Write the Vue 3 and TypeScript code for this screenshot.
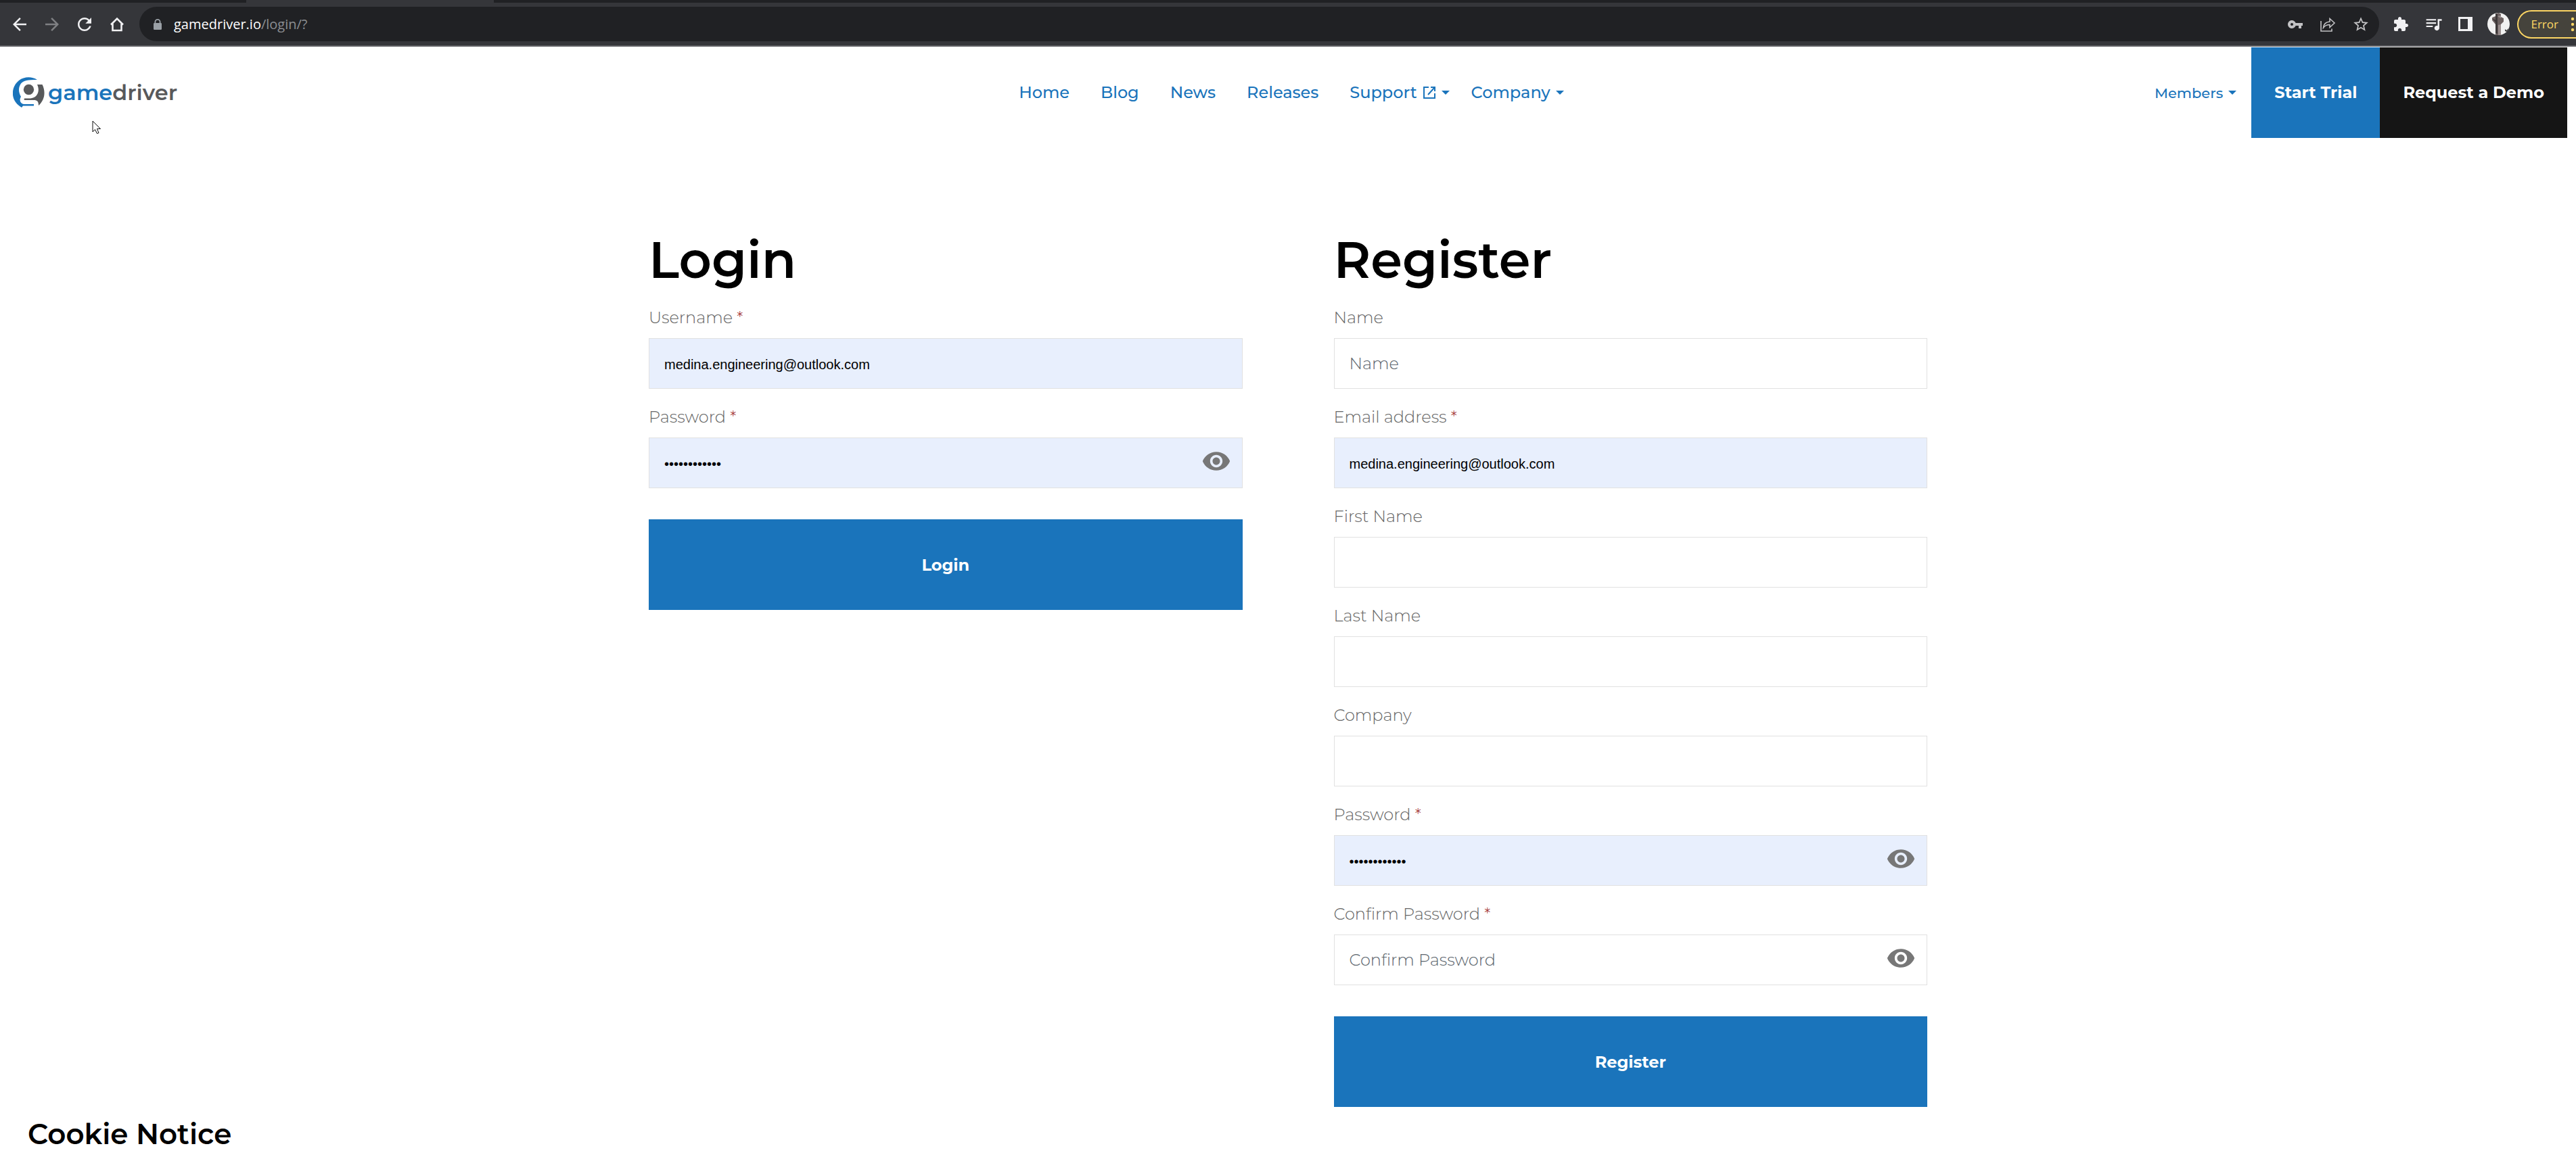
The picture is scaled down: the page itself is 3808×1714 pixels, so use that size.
<script setup lang="ts">
import { reactive, ref } from 'vue'

interface Field {
  id: string
  label: string
  type: 'text' | 'email' | 'password'
  required?: boolean
  placeholder?: string
  filled?: boolean
}

interface NavItem {
  label: string
  external?: boolean
  menu?: boolean
}

const navItems: NavItem[] = [
  { label: 'Home' },
  { label: 'Blog' },
  { label: 'News' },
  { label: 'Releases' },
  { label: 'Support', external: true, menu: true },
  { label: 'Company', menu: true },
]

const forms: { title: string; fields: Field[] }[] = [
  {
    title: 'Login',
    fields: [
      { id: 'login-username', label: 'Username', type: 'text', required: true, filled: true },
      { id: 'login-password', label: 'Password', type: 'password', required: true, filled: true },
    ],
  },
  {
    title: 'Register',
    fields: [
      { id: 'reg-name', label: 'Name', type: 'text', placeholder: 'Name' },
      { id: 'reg-email', label: 'Email address', type: 'email', required: true, filled: true },
      { id: 'reg-first', label: 'First Name', type: 'text' },
      { id: 'reg-last', label: 'Last Name', type: 'text' },
      { id: 'reg-company', label: 'Company', type: 'text' },
      { id: 'reg-password', label: 'Password', type: 'password', required: true, filled: true },
      { id: 'reg-confirm', label: 'Confirm Password', type: 'password', required: true, placeholder: 'Confirm Password' },
    ],
  },
]

const values = reactive<Record<string, string>>({
  'login-username': 'medina.engineering@outlook.com',
  'login-password': 'abcdefghijkl',
  'reg-email': 'medina.engineering@outlook.com',
  'reg-password': 'abcdefghijkl',
})

const revealed = reactive<Record<string, boolean>>({})
const address = ref('gamedriver.io/login/?')

function inputType(field: Field): string {
  return field.type === 'password' && revealed[field.id] ? 'text' : field.type
}
</script>

<template>
  <div class="page">
    <div class="browser">
      <div class="tabstrip"><span class="tab"></span></div>
      <div class="toolbar">
        <div class="tools tools-left">
          <button type="button" aria-label="Back">
            <svg width="30" height="30" viewBox="0 0 24 24"><path d="M20 11H7.83l5.59-5.59L12 4l-8 8 8 8 1.41-1.41L7.83 13H20v-2z" /></svg>
          </button>
          <button type="button" class="dim" aria-label="Forward">
            <svg width="30" height="30" viewBox="0 0 24 24"><path d="M12 4l-1.41 1.41L16.17 11H4v2h12.17l-5.58 5.59L12 20l8-8z" /></svg>
          </button>
          <button type="button" aria-label="Reload">
            <svg width="30" height="30" viewBox="0 0 24 24"><path d="M17.65 6.35C16.2 4.9 14.21 4 12 4c-4.42 0-7.99 3.58-7.99 8s3.57 8 7.99 8c3.73 0 6.84-2.55 7.73-6h-2.08c-.82 2.33-3.04 4-5.65 4-3.31 0-6-2.69-6-6s2.69-6 6-6c1.66 0 3.14.69 4.22 1.78L13 11h7V4l-2.35 2.35z" /></svg>
          </button>
          <button type="button" aria-label="Home page">
            <svg width="30" height="30" viewBox="0 0 30 30"><path d="M6 15.500L15 6.500L24 15.500M8.500 14V24H21.500V14" fill="none" stroke="currentColor" stroke-width="2.600" /></svg>
          </button>
        </div>
        <div class="omnibox">
          <svg class="lock" width="14" height="18" viewBox="0 0 14 18"><path d="M2.500 7V5.500a4.500 4.500 0 0 1 9 0V7h.2q1.300 0 1.300 1.300v7.400q0 1.300-1.300 1.300H2.300Q1 17 1 15.700V8.300Q1 7 2.300 7zM4.300 7h5.400V5.500a2.700 2.700 0 0 0-5.400 0z" fill-rule="evenodd" /></svg>
          <a class="url" href="#" :aria-label="address">gamedriver.io<span>/login/?</span></a>
          <div class="omni-actions">
            <button type="button" aria-label="Saved passwords">
              <svg width="24" height="24" viewBox="0 0 24 24"><path d="M12.650 10C11.830 7.670 9.610 6 7 6c-3.310 0-6 2.690-6 6s2.690 6 6 6c2.610 0 4.830-1.670 5.650-4H17v4h4v-4h2v-4H12.650zM7 14c-1.100 0-2-.9-2-2s.9-2 2-2 2 .9 2 2-.9 2-2 2z" /></svg>
            </button>
            <button type="button" aria-label="Share">
              <svg width="24" height="24" viewBox="0 0 24 24" fill="none" stroke="currentColor" stroke-width="1.600"><path d="M2 7V22H18V18.500" /><path d="M5.500 17C6 11.500 9 8.500 15 8V3.500L22 10L15 16.500V12.500C10.500 12.500 8 13.500 5.500 17Z" /></svg>
            </button>
            <button type="button" aria-label="Bookmark">
              <svg width="26" height="26" viewBox="0 0 24 24"><path d="M22 9.240l-7.190-.62L12 2 9.190 8.630 2 9.240l5.460 4.730L5.820 21 12 17.270 18.180 21l-1.630-7.030L22 9.240zM12 15.400l-3.760 2.270 1-4.280-3.320-2.880 4.380-.38L12 6.100l1.710 4.040 4.380.38-3.320 2.880 1 4.280L12 15.400z" /></svg>
            </button>
          </div>
        </div>
        <div class="tools tools-right">
          <button type="button" aria-label="Extensions">
            <svg width="24" height="24" viewBox="0 0 24 24"><path d="M20.500 11H19V7c0-1.100-.9-2-2-2h-4V3.500C13 2.120 11.880 1 10.500 1S8 2.120 8 3.500V5H4c-1.100 0-1.990.9-1.990 2v3.800H3.500c1.490 0 2.700 1.210 2.700 2.700s-1.210 2.700-2.700 2.700H2V20c0 1.100.9 2 2 2h3.800v-1.500c0-1.490 1.210-2.700 2.700-2.700 1.490 0 2.700 1.210 2.700 2.700V22H17c1.100 0 2-.9 2-2v-4h1.500c1.380 0 2.500-1.120 2.500-2.500S21.880 11 20.500 11z" /></svg>
          </button>
          <button type="button" aria-label="Media controls">
            <svg width="29" height="29" viewBox="0 0 24 24"><path d="M15 6H3v1.700h12V6zm0 4H3v1.700h12V10zM3 15.700h8V14H3v1.700zM17 6v8.180c-.31-.11-.65-.18-1-.18-1.660 0-3 1.340-3 3s1.340 3 3 3 3-1.340 3-3V8h3V6h-5z" /></svg>
          </button>
          <button type="button" aria-label="Side panel">
            <svg width="21" height="21" viewBox="0 0 21 21"><path d="M0 0H21V21H0ZM3 3V18H14V3Z" fill-rule="evenodd" /></svg>
          </button>
          <button type="button" aria-label="Profile">
            <svg width="33" height="33" viewBox="0 0 33 33"><circle cx="16.500" cy="16.500" r="16.500" fill="#f1f1f1" /><path d="M12 1L17 0L20 2V6L24 8V13L20 17V33H12V17L7 11V7L12 5Z" fill="#6b6060" /><path d="M12 1L15 2V31L12 30ZM7 8L13 11V15Z" fill="#3d3839" /><path d="M16 18L20 17V33H16ZM15 5L20 4V8Z" fill="#988c8c" /><path d="M26 24L28 26L31 23L29 28L26 27Z" fill="#303030" /></svg>
          </button>
        </div>
        <button type="button" class="error">
          Error
          <svg width="6" height="22" viewBox="0 0 6 22"><circle cx="3" cy="3" r="2.200" /><circle cx="3" cy="11" r="2.200" /><circle cx="3" cy="19" r="2.200" /></svg>
        </button>
      </div>
    </div>

    <header class="site-header">
      <a class="logo" href="#" aria-label="gamedriver">
        <svg width="47" height="46" viewBox="0 0 47 46">
          <path d="M36 4C28-1 17-1 9 5C-1 13-3 27 4 37C7 41 10 43 13 45L15 42.500H31V40H16C11 39 9 34 12 29C8 22 8 15 12 9.500C16 5 22 4 36 4Z" fill="#1a74bb" />
          <circle cx="23.500" cy="18.500" r="7.700" fill="#58595b" />
          <path d="M36 11H43.500C49 22 47 34 38 42C38 36 36 34 31 34H18C16 34 16 31.500 18 31.500H26C35 31 41 22 36 11Z" fill="#58595b" />
        </svg>
        <span class="wordmark">game<span>driver</span></span>
      </a>
      <nav class="nav">
        <a v-for="item in navItems" :key="item.label" href="#" :class="{ 'has-menu': item.menu }">
          {{ item.label }}
          <svg v-if="item.external" class="external" width="20" height="20" viewBox="0 0 20 20" fill="none" stroke="currentColor" stroke-width="2"><path d="M9 2H2V18H18V11M12 2H18V8M18 2L8 13" /></svg>
          <span v-if="item.menu" class="caret"></span>
        </a>
      </nav>
      <div class="account">
        <a class="members" href="#">Members <span class="caret"></span></a>
        <a class="cta" href="#">Start Trial</a>
        <a class="cta dark" href="#">Request a Demo</a>
      </div>
    </header>

    <main class="forms">
      <form v-for="form in forms" :key="form.title" class="form" @submit.prevent>
        <h1>{{ form.title }}</h1>
        <div v-for="field in form.fields" :key="field.id" class="field">
          <label :for="field.id">{{ field.label }} <span v-if="field.required" class="star">*</span></label>
          <div class="control">
            <input
              :id="field.id"
              v-model="values[field.id]"
              :type="inputType(field)"
              :placeholder="field.placeholder"
              :class="{ filled: field.filled }"
            />
            <button
              v-if="field.type === 'password'"
              type="button"
              class="eye"
              aria-label="Show password"
              @click="revealed[field.id] = !revealed[field.id]"
            >
              <svg width="44" height="44" viewBox="0 0 24 24"><path d="M12 4.500C7 4.500 2.730 7.610 1 12c1.730 4.390 6 7.500 11 7.500s9.270-3.110 11-7.500c-1.730-4.390-6-7.500-11-7.500zM12 17c-2.760 0-5-2.240-5-5s2.240-5 5-5 5 2.240 5 5-2.240 5-5 5zm0-8c-1.660 0-3 1.340-3 3s1.340 3 3 3 3-1.340 3-3-1.340-3-3-3z" /></svg>
            </button>
          </div>
        </div>
        <button type="submit" class="submit">{{ form.title }}</button>
      </form>
    </main>

    <section class="cookie"><h2>Cookie Notice</h2></section>

    <svg class="pointer" width="14" height="21" viewBox="0 0 14 21"><path d="M1 1V17L4.500 13.500L7.500 19.500L10 18.500L7.500 12.500H12.500Z" fill="#fff" stroke="#111" stroke-width="1" /></svg>
  </div>
</template>

<style>
body {
  margin: 0;
  background: #fff;
}
</style>

<style scoped>
.page {
  position: relative;
  display: flex;
  flex-direction: column;
  min-height: 100vh;
  overflow-x: hidden;
  font-family: Montserrat, Inter, sans-serif;
  font-size: 24px;
  color: #000;
}
button {
  padding: 0;
  border: 0;
  background: none;
  color: inherit;
  font: inherit;
  cursor: pointer;
}
a {
  color: inherit;
  text-decoration: none;
}
svg {
  display: block;
  flex: none;
  fill: currentColor;
}
svg[fill='none'] {
  fill: none;
}

.browser {
  border-bottom: 2px solid #5f6064;
  background: #35363a;
}
.tabstrip {
  height: 4px;
  background: #202124;
}
.tab {
  display: block;
  width: 366px;
  height: 4px;
  margin-left: 364px;
  background: #35363a;
}
.toolbar {
  display: flex;
  align-items: center;
  height: 63px;
  color: #f1f1f3;
}
.tools {
  display: flex;
  align-items: center;
}
.tools-left {
  gap: 18px;
  padding: 0 18px 0 14px;
}
.dim {
  color: #7f8083;
}
.omnibox {
  display: flex;
  flex: 1;
  align-items: center;
  height: 51px;
  box-sizing: border-box;
  padding: 0 14px 0 20px;
  border-radius: 26px;
  background: #202124;
}
.lock {
  margin-right: 17px;
  color: #9aa0a6;
}
.url {
  flex: 1;
  font-family: 'Open Sans', sans-serif;
  font-size: 20px;
  line-height: 30px;
  color: #fff;
}
.url span {
  color: #8b8e92;
}
.omni-actions {
  display: flex;
  align-items: center;
  gap: 24px;
  color: #c2c2c4;
}
.tools-right {
  gap: 22px;
  padding: 0 11px 0 20px;
}
.error {
  display: flex;
  align-items: center;
  gap: 18px;
  height: 42px;
  padding: 0 2px 0 18px;
  border: 2px solid #fdd663;
  border-right: 0;
  border-radius: 21px 0 0 21px;
  background: #45433c;
  font-family: 'Open Sans', sans-serif;
  font-size: 17px;
  color: #fdd663;
}

.site-header {
  display: grid;
  grid-template-columns: 1fr auto 1fr;
  align-items: center;
  padding: 1px 13px 0 19px;
  color: #1a74bb;
}
.logo {
  display: flex;
  align-items: center;
  gap: 5px;
}
.wordmark {
  font-size: 32px;
  font-weight: 600;
  line-height: 40px;
}
.wordmark span {
  color: #58595b;
}
.nav {
  display: flex;
  gap: 46px;
  padding-left: 4px;
  font-weight: 500;
  line-height: 36px;
}
.nav a {
  display: flex;
  align-items: center;
  gap: 8px;
}
.has-menu + .has-menu {
  margin-left: -14px;
}
.caret {
  width: 0;
  border: 6px solid transparent;
  border-top-color: currentColor;
  border-bottom: 0;
}
.account {
  display: flex;
  justify-content: flex-end;
  align-items: stretch;
}
.members {
  display: flex;
  align-items: center;
  gap: 8px;
  margin-right: 22px;
  font-size: 21px;
  font-weight: 500;
}
.cta {
  padding: 0 34px;
  background: #1a74bb;
  font-weight: 700;
  line-height: 134px;
  color: #fff;
}
.dark {
  background: #151515;
}

.forms {
  display: grid;
  grid-template-columns: 1fr 1fr;
  align-items: start;
  gap: 135px;
  width: 100%;
  max-width: 1890px;
  margin: 0 auto;
  padding-top: 136px;
}
.form {
  display: flex;
  flex-direction: column;
  gap: 24px;
}
h1 {
  margin: 0;
  font-size: 75px;
  font-weight: 600;
  line-height: 88px;
}
label {
  display: block;
  margin-bottom: 12px;
  line-height: 36px;
  font-weight: 300;
  color: #666;
}
.star {
  color: #a02c2c;
}
.control {
  position: relative;
}
input {
  display: block;
  width: 100%;
  height: 75px;
  box-sizing: border-box;
  padding: 0 22px;
  border: 1px solid #e1e1e1;
  border-radius: 0;
  outline: 0;
  background: #fff;
  font: inherit;
  font-weight: 300;
  color: #000;
}
input::placeholder {
  color: #5c656d;
  opacity: 1;
}
input.filled {
  padding-top: 3px;
  background: #e8effd;
  font: 20px 'Liberation Sans', Arial, sans-serif;
}
.eye {
  position: absolute;
  top: 13px;
  right: 17px;
  color: #777;
}
.submit {
  height: 134px;
  margin-top: 22px;
  background: #1a74bb;
  font-weight: 700;
  color: #fff;
}

.cookie {
  margin-top: auto;
  padding: 0 41px 12px;
}
h2 {
  margin: 0;
  font-size: 42px;
  font-weight: 600;
  line-height: 50px;
}
.pointer {
  position: absolute;
  top: 178px;
  left: 136px;
}
</style>
